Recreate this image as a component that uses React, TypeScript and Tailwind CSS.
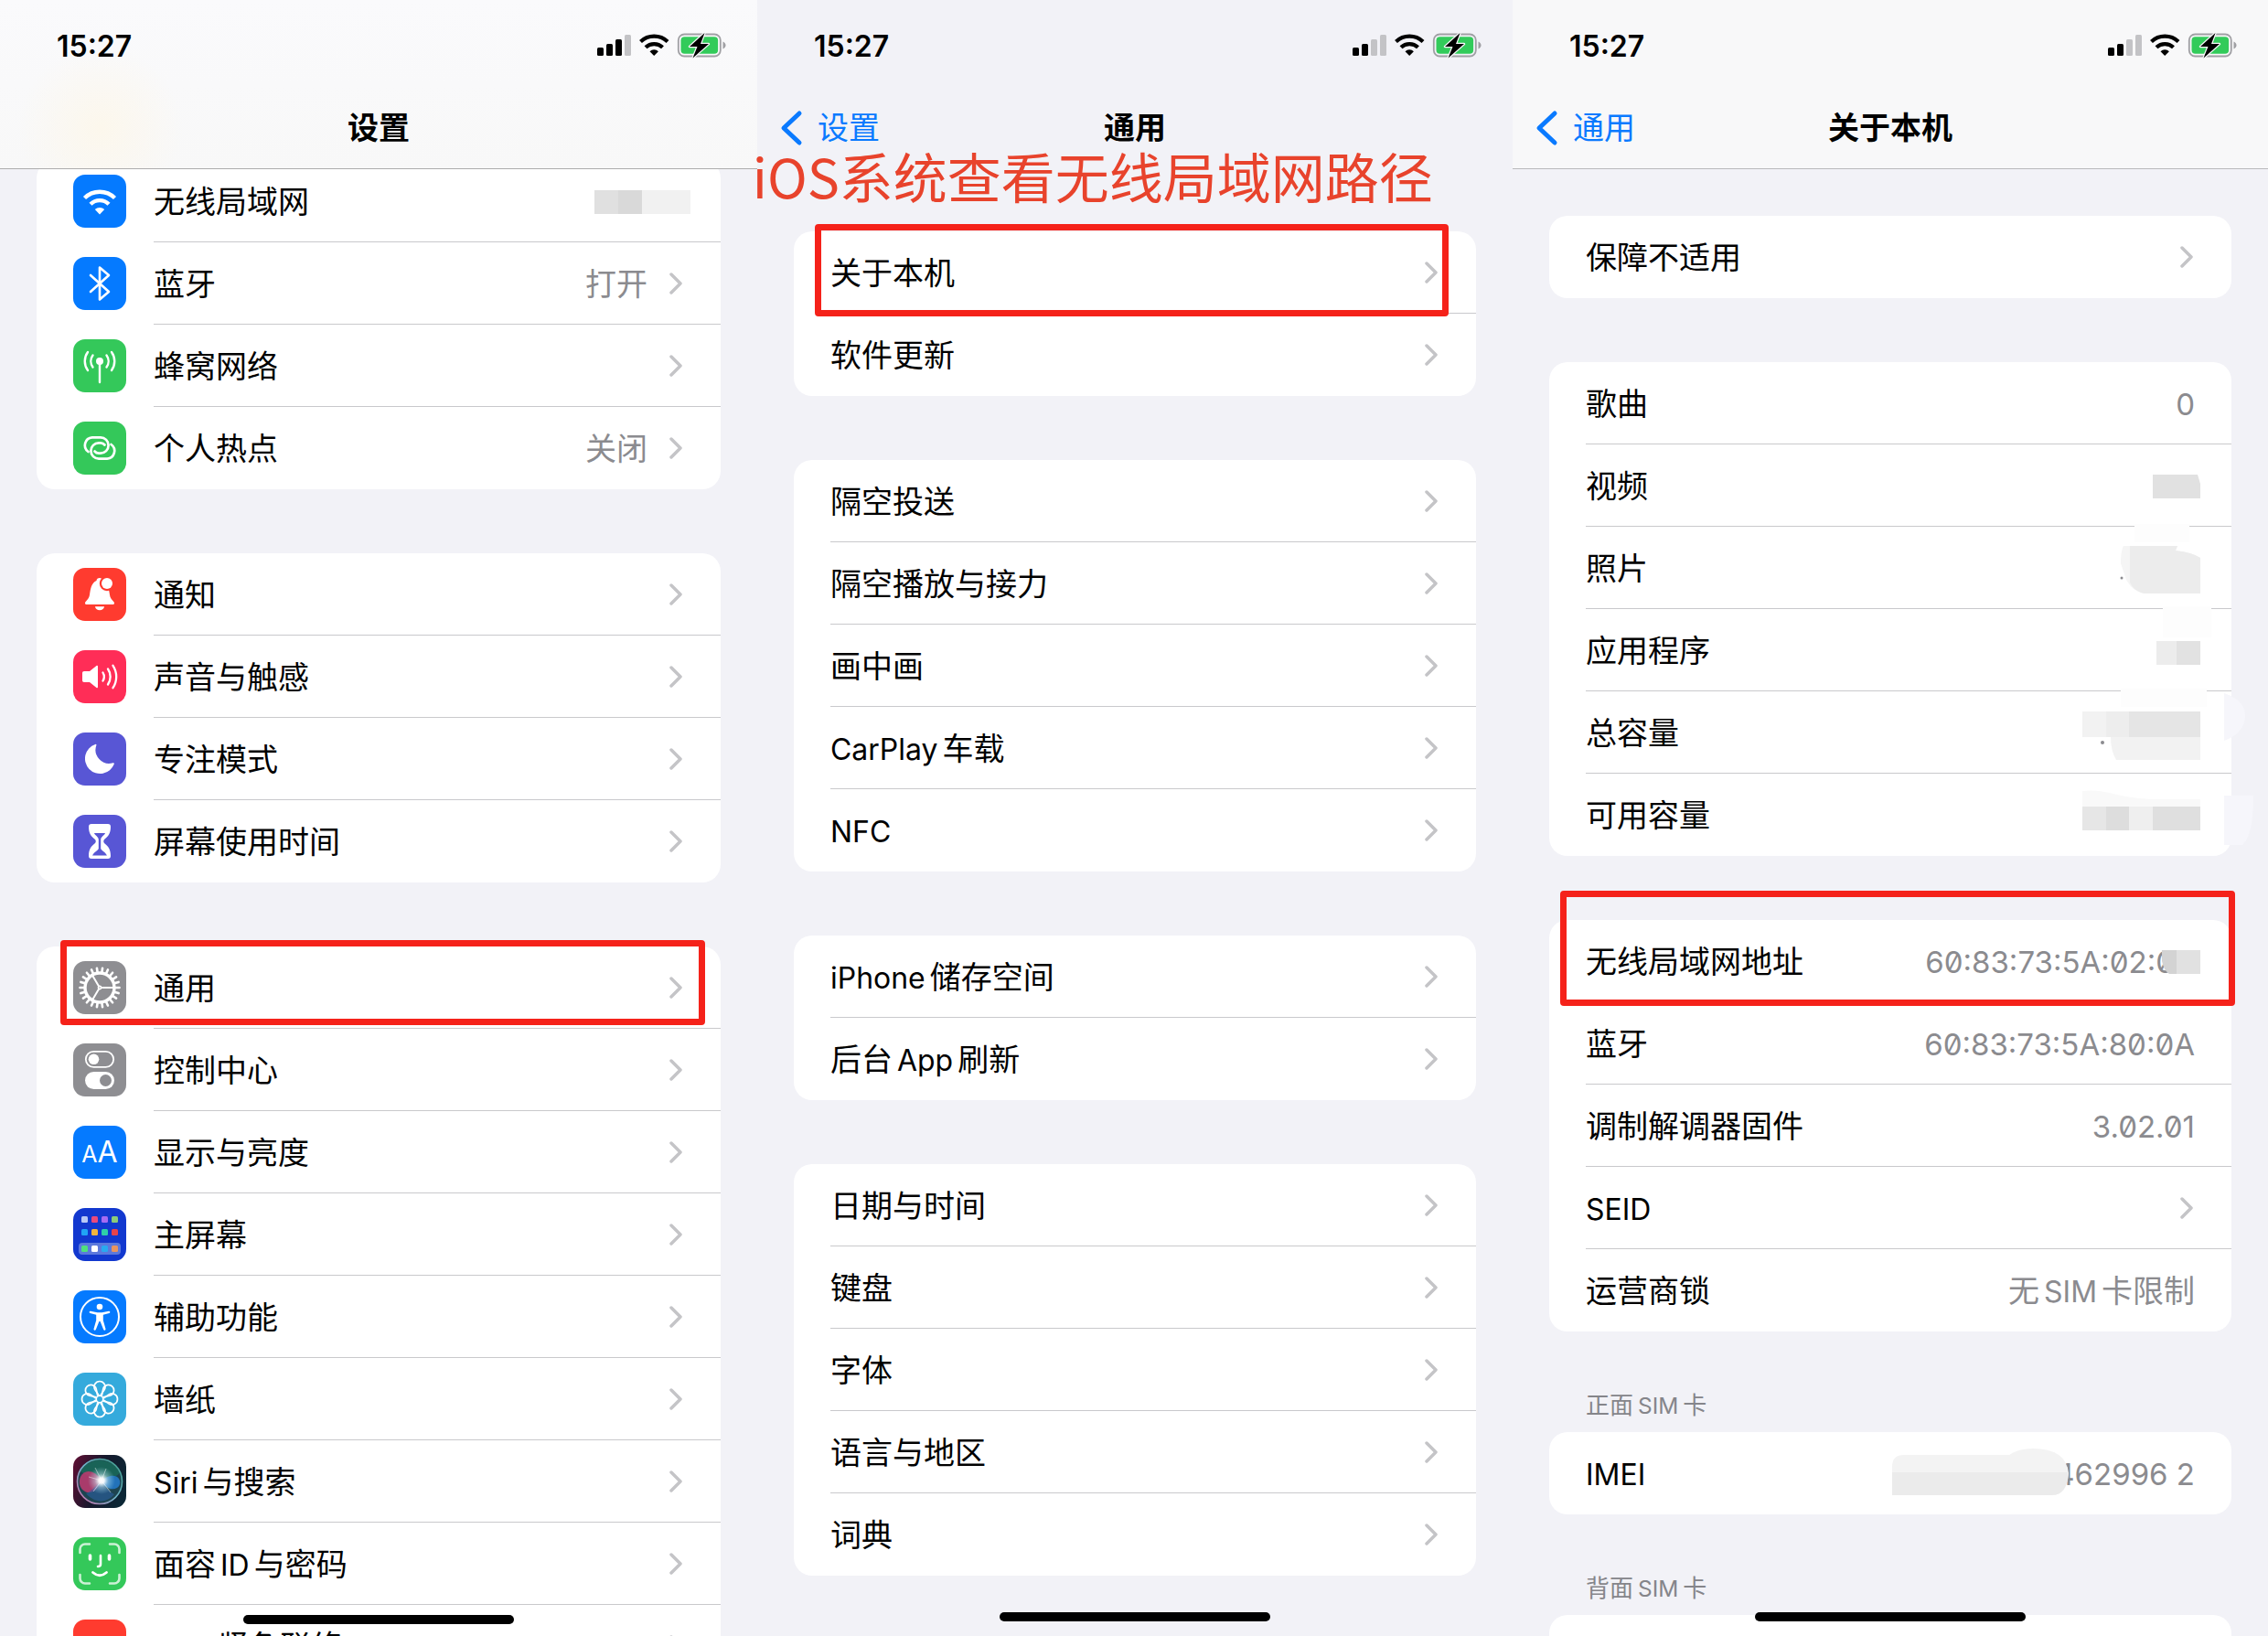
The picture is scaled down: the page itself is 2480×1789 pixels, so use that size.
import type { ReactNode } from "react";

type RowData = {
  label: string;
  value?: string;
  icon?: ReactNode;
  chevron?: boolean;
  slashed?: boolean;
  valueClass?: string;
  cover?: ReactNode;
  mark?: string;
};

const white = "#ffffff";

/* ---------- glyphs ---------- */

function Tile({ bg, children }: { bg: string; children?: ReactNode }) {
  return (
    <svg viewBox="0 0 58 58" className="size-[58px] shrink-0" aria-hidden="true">
      <rect width="58" height="58" rx="13" fill={bg} />
      {children}
    </svg>
  );
}

const WifiTile = (
  <Tile bg="#057aff">
    <g fill="none" stroke={white} strokeWidth="4.4">
      <path d="M12.5 25.5a23.5 23.5 0 0 1 33 0" />
      <path d="M19 32.2a14.3 14.3 0 0 1 20 0" />
    </g>
    <path d="M29 43.5l-5.2-5.4a7.6 7.6 0 0 1 10.4 0z" fill={white} />
  </Tile>
);

const BluetoothTile = (
  <Tile bg="#057aff">
    <path d="M19 20l20 18-10 8.5V11.500l10 8.500-20 18" fill="none" stroke={white} strokeWidth="2.600" strokeLinejoin="round" strokeLinecap="round" />
  </Tile>
);

const CellularTile = (
  <Tile bg="#34c85a">
    <g fill="none" stroke={white} strokeWidth="2.400" strokeLinecap="round">
      <path d="M29 25v22" />
      <path d="M21.500 17.500a11 11 0 0 0 0 13M36.500 17.500a11 11 0 0 1 0 13" />
      <path d="M16 14a17 17 0 0 0 0 20M42 14a17 17 0 0 1 0 20" />
    </g>
    <circle cx="29" cy="24" r="4" fill={white} />
  </Tile>
);

const HotspotTile = (
  <Tile bg="#34c85a">
    <g fill="none" stroke={white} strokeWidth="2.700" strokeLinecap="round">
      <path d="M16.500 33A8.600 8.600 0 0 1 20.800 17.400H30A8.600 8.600 0 0 1 30 34.600H28A6 6 0 0 1 23.500 32.500" />
      <path d="M16.500 33A8.600 8.600 0 0 1 20.800 17.400H30A8.600 8.600 0 0 1 30 34.600H28A6 6 0 0 1 23.500 32.500" transform="rotate(180 29 29)" />
    </g>
  </Tile>
);

const BellTile = (
  <Tile bg="#ff3b2f">
    <path d="M13 38.500c0-2 4-3.500 5-9 1-7 2-13 7.500-15.500 0-2 1.500-3 3.500-3 1.500 0 3 .8 3.500 2.500 5 2.500 6.500 8.500 7.500 16 .8 5.500 5 7 5 9 0 1-.8 1.500-2 1.500H15c-1.200 0-2-.5-2-1.500z" fill={white} />
    <path d="M24 42.200h10a5 4 0 0 1-10 0z" fill={white} />
    <circle cx="37" cy="17" r="8.200" fill="#ff3b2f" />
    <circle cx="37" cy="17" r="6" fill={white} />
  </Tile>
);

const SoundTile = (
  <Tile bg="#ff2d57">
    <path d="M12 23h6l7.500-6c.8-.6 1.500-.2 1.500.8v22.400c0 1-.7 1.400-1.500.8L18 35h-6c-1.200 0-2-.8-2-2v-8c0-1.200.8-2 2-2z" fill={white} />
    <g fill="none" stroke={white} strokeWidth="2.300" strokeLinecap="round">
      <path d="M32.500 24.500a8.500 8.500 0 0 1 0 9" />
      <path d="M38 20.500a15 15 0 0 1 0 17" />
      <path d="M43.500 16.800a22 22 0 0 1 0 24.400" />
    </g>
  </Tile>
);

const MoonTile = (
  <Tile bg="#5856d5">
    <path d="M25.500 13.500a1 1 0 0 0-1.400-.6 16.500 16.500 0 1 0 20.700 21.700 1 1 0 0 0-1.300-1.300 15 15 0 0 1-18-19.800z" fill={white} />
  </Tile>
);

const HourglassTile = (
  <Tile bg="#5856d5">
    <path d="M20 10h18c2 0 3 1.200 3 3 0 8-3 10.500-7 14-1 .9-1 3.100 0 4 4 3.500 7 6 7 14 0 1.800-1 3-3 3H20c-2 0-3-1.200-3-3 0-8 3-10.500 7-14 1-.9 1-3.100 0-4-4-3.500-7-6-7-14 0-1.800 1-3 3-3z" fill={white} />
    <path d="M23 20h12c-.8 2.500-4.800 4-4.800 7v10c1.300 2.500 4.800 3.500 6.800 7.500H21c2-4 5.500-5 6.800-7.500V27c0-3-4-4.500-4.800-7z" fill="#5856d5" />
  </Tile>
);

const teeth = Array.from({ length: 22 }, (_, i) => (i * 360) / 22);

const GearTile = (
  <Tile bg="#8e8e92">
    <g stroke={white} fill="none">
      <circle cx="29" cy="29" r="16" strokeWidth="3.400" />
      <g strokeWidth="2.600">
        {teeth.map((a) => (
          <path key={a} d="M45.500 29h5" transform={`rotate(${a} 29 29)`} strokeLinecap="round" />
        ))}
      </g>
      <path d="M30 29h14.500M28.500 28.200L21 15.500M28.500 29.800L21 42.500" strokeWidth="2" />
      <circle cx="29" cy="29" r="1.600" strokeWidth="1.600" />
    </g>
  </Tile>
);

const ControlTile = (
  <Tile bg="#8e8e92">
    <rect x="13.800" y="8.800" width="30.400" height="17" rx="8.500" fill="none" stroke={white} strokeWidth="1.800" />
    <circle cx="22.500" cy="17.300" r="5.800" fill={white} />
    <rect x="13" y="31" width="32" height="19" rx="9.500" fill={white} />
    <circle cx="35.500" cy="40.500" r="6.500" fill="#8e8e92" />
  </Tile>
);

const DisplayTile = (
  <span className="flex size-[58px] shrink-0 items-baseline justify-center rounded-[13px] bg-[#057aff] font-[Inter] leading-[58px] text-white" aria-hidden="true">
    <span className="text-[25px]">A</span>
    <span className="text-[32px]">A</span>
  </span>
);

const appDots: [number, number, string][] = [
  [9, 9, "#b9c8f5"], [20, 9, "#ea4a7c"], [31, 9, "#a66bf2"], [42, 9, "#8ccb78"],
  [9, 23, "#20a5f5"], [20, 23, "#f3b43c"], [31, 23, "#2fd0a8"], [42, 23, "#e8434a"],
  [9, 41, "#4fe07c"], [20, 41, "#ffffff"], [31, 41, "#28a9f0"], [42, 41, "#e9955f"],
];

const HomeTile = (
  <Tile bg="#1238cf">
    <rect x="6" y="38" width="46" height="13" rx="4" fill="#5b78dc" />
    {appDots.map(([x, y, c]) => (
      <rect key={`${x}-${y}`} x={x} y={y} width="7" height="7" rx="1.500" fill={c} />
    ))}
  </Tile>
);

const AccessTile = (
  <Tile bg="#057aff">
    <circle cx="29" cy="29" r="21" fill="none" stroke={white} strokeWidth="2" />
    <circle cx="29" cy="18" r="3.300" fill={white} />
    <path d="M19 22.800l7.500 1.400h5l7.500-1.400c1.500-.2 1.900 1.900.4 2.200L32.800 26.800v6l2.700 9.400c.3 1.500-1.700 2.100-2.300.7L29.600 34h-1.200l-3.600 8.900c-.6 1.400-2.600.8-2.300-.7l2.700-9.400v-6L18.600 25c-1.500-.3-1.100-2.400.4-2.200z" fill={white} />
  </Tile>
);

const petals = [0, 45, 90, 135, 180, 225, 270, 315];

const WallpaperTile = (
  <Tile bg="#35aadc">
    <g fill="none" stroke={white} strokeWidth="1.700">
      {petals.map((a) => (
        <path key={a} d="M28 24.800L23.800 18.500a6 6 0 1 1 10.400 0L30 24.800" transform={`rotate(${a} 29 29)`} />
      ))}
      <circle cx="29" cy="29" r="3.800" />
    </g>
  </Tile>
);

const SiriTile = (
  <Tile bg="url(#siriBase)">
    <defs>
      <linearGradient id="siriBase" x1="0" y1="0.2" x2="1" y2="0.5">
        <stop offset="0" stopColor="#5a0f33" />
        <stop offset="0.500" stopColor="#16182c" />
        <stop offset="1" stopColor="#0c2735" />
      </linearGradient>
      <linearGradient id="siriRing" x1="0" y1="1" x2="1" y2="0">
        <stop offset="0" stopColor="#d06aa8" />
        <stop offset="0.500" stopColor="#6fb4c9" />
        <stop offset="1" stopColor="#3c9c86" />
      </linearGradient>
      <radialGradient id="siriGlow">
        <stop offset="0" stopColor="#ffffff" />
        <stop offset="0.200" stopColor="#ffffff" stopOpacity="0.950" />
        <stop offset="0.500" stopColor="#c9eef8" stopOpacity="0.450" />
        <stop offset="1" stopColor="#9fe0f0" stopOpacity="0" />
      </radialGradient>
    </defs>
    <circle cx="29" cy="29" r="24" fill="#1d4450" />
    <path d="M8 18a24 24 0 0 1 43 2c-8 8-30 8-43-2z" fill="#18705a" opacity="0.700" />
    <path d="M31 28C24 16 12 15 8 24s3 18 10 17 10-6 13-13z" fill="#c23a70" opacity="0.850" />
    <path d="M30 29c6-6 16-9 20-3s-2 13-9 11-8-5-11-8z" fill="#2478c4" opacity="0.900" />
    <path d="M30 29c-6 6-12 12-16 13 9 11 23 11 31 1-6-3-11-9-15-14z" fill="#2b5fa0" opacity="0.600" />
    <circle cx="31" cy="28" r="15" fill="url(#siriGlow)" />
    <path d="M31 28L24 14M31 28L17 24M31 28l-9 12M31 28l10 13M31 28l5-13" stroke={white} strokeWidth="0.800" opacity="0.600" />
    <circle cx="29" cy="29" r="24.500" fill="none" stroke="url(#siriRing)" strokeWidth="1.600" />
  </Tile>
);

const FaceTile = (
  <Tile bg="#34c85a">
    <g fill="none" stroke={white} strokeLinecap="round">
      <path d="M7.500 17v-4a5.500 5.500 0 0 1 5.500-5.500h5M40 7.500h5a5.500 5.500 0 0 1 5.500 5.500v4M50.500 41v4a5.500 5.500 0 0 1-5.500 5.500h-5M18 50.500h-5A5.500 5.500 0 0 1 7.500 45v-4" strokeWidth="2.600" opacity="0.750" />
      <path d="M18.500 20v4M39.500 20v4" strokeWidth="3.600" />
      <path d="M30 20v9.500q0 2.500-3 2.500" strokeWidth="2.600" />
      <path d="M21.500 38.500q7.500 6.500 15 0" strokeWidth="2.800" />
    </g>
  </Tile>
);

const SosTile = (
  <span className="flex size-[58px] shrink-0 items-center justify-center rounded-[13px] bg-[#ff3b2f] font-[Inter] text-[22px] font-semibold text-white" aria-hidden="true">
    SOS
  </span>
);

function Chevron() {
  return (
    <svg viewBox="0 0 16 26" className="h-[26px] w-4 shrink-0" fill="none" stroke="#c4c4c7" strokeWidth="3.500" strokeLinecap="round" strokeLinejoin="round" aria-hidden="true">
      <path d="M2 3l10 10L2 23" />
    </svg>
  );
}

function StatusIcons({ bars }: { bars: number }) {
  const heights = [9, 13, 18, 23];
  return (
    <svg viewBox="0 0 142 28" className="h-7 w-[142px]" aria-hidden="true">
      {heights.map((h, i) => (
        <rect key={h} x={1 + i * 10} y={25 - h} width="7" height={h} rx="1.500" fill={i < bars ? "#000000" : "#c3c3c6"} />
      ))}
      <g fill="none" stroke="#000000" strokeWidth="4.200">
        <path d="M48.500 9.500a21.500 21.500 0 0 1 29.500 0" />
        <path d="M54 15.700a13.500 13.500 0 0 1 18.500 0" />
      </g>
      <path d="M63.200 25l-4.700-4.800a6.800 6.800 0 0 1 9.400 0z" fill="#000000" />
      <rect x="89.800" y="1.500" width="46" height="24" rx="6.500" fill="none" stroke="#a0a0a4" strokeWidth="1.800" />
      <path d="M138.500 9.500c4 1.500 4 6.500 0 8z" fill="#a0a0a4" />
      <rect x="92.500" y="4.200" width="40.600" height="18.600" rx="4" fill="#32cb5a" />
      <path d="M118.500 0L102 15h8.500l-5 12.500L123 12h-9z" fill="#000000" stroke="#f7f7f9" strokeWidth="2.400" strokeLinejoin="round" paintOrder="stroke" />
    </svg>
  );
}

/* ---------- pixelated value covers; x = 340 is the card's right edge ---------- */

type Block = [number, number, number, number, string];

function Cover({ blocks = [], children }: { blocks?: Block[]; children?: ReactNode }) {
  return (
    <svg viewBox="-60 0 400 90" className="pointer-events-none absolute top-0 right-0 h-[90px] w-[400px] overflow-visible" aria-hidden="true">
      {blocks.map(([x, y, w, h, c], i) => (
        <rect key={i} x={x} y={y} width={w} height={h} fill={c} />
      ))}
      {children}
    </svg>
  );
}

/* ---------- layout ---------- */

/* Latin words inside Chinese text are set a little smaller, with air on each side. */
function Mixed({ text }: { text: string }) {
  return (
    <>
      {text.split(/([A-Za-z]+)/).map((part, i) =>
        i % 2 ? (
          <span key={i} className="mx-[5px] text-[0.94em] first:ml-0 last:mr-0">
            {part}
          </span>
        ) : (
          part && <span key={i}>{part}</span>
        ),
      )}
    </>
  );
}

function Row({ row, last }: { row: RowData; last: boolean }) {
  const chevron = row.chevron ?? true;
  const numeric = row.value !== undefined && /^\d/.test(row.value);
  return (
    <a href="#" className="relative flex h-[90px] items-center gap-[30px] pl-10">
      {row.icon}
      <span className={`flex h-full min-w-0 flex-1 items-center justify-between gap-6 border-b pr-10 ${last ? "border-transparent" : "border-[#c9c9cc]"}`}>
        <span className="pt-[3px] whitespace-nowrap text-black">
          <Mixed text={row.label} />
        </span>
        <span className="flex items-center gap-6 text-[#8b8b8f]">
          {row.value && (
            <span className={`pt-[3px] whitespace-nowrap ${row.slashed ? "slashed-zero" : ""} ${row.valueClass ?? ""}`}>
              {numeric ? <span className="text-[33px]">{row.value}</span> : <Mixed text={row.value} />}
            </span>
          )}
          {chevron && <Chevron />}
        </span>
      </span>
      {row.cover}
      {row.mark && <span className={`pointer-events-none absolute z-20 rounded-[4px] border-[7px] border-[#f5221a] ${row.mark}`} />}
    </a>
  );
}

function Card({ rows }: { rows: RowData[] }) {
  return (
    <div className="rounded-[20px] bg-white">
      {rows.map((row, i) => (
        <Row key={row.label} row={row} last={i === rows.length - 1} />
      ))}
    </div>
  );
}

type PhoneProps = { title: string; back?: string; bars: number; header: string; body: string; home: string; children: ReactNode };

function Phone({ title, back, bars, header, body, home, children }: PhoneProps) {
  return (
    <section className="relative h-full min-w-0 overflow-hidden bg-[#f2f2f7]">
      <header className={`relative z-10 border-b pb-1 ${header}`}>
        <div className="flex h-[100px] items-center justify-between pr-[34px] pl-[62px]">
          <time className="pt-px font-[Inter] text-[32px] font-semibold">15:27</time>
          <StatusIcons bars={bars} />
        </div>
        <nav className="grid h-20 grid-cols-[1fr_auto_1fr] items-center">
          {back ? (
            <a href="#" className="flex items-center gap-4 pl-6 text-[#0a7aff]">
              <svg viewBox="0 0 26 40" className="h-10 w-[26px]" fill="none" stroke="currentColor" strokeWidth="5" strokeLinecap="round" strokeLinejoin="round" aria-hidden="true">
                <path d="M22 4L5 20l17 16" />
              </svg>
              {back}
            </a>
          ) : (
            <span />
          )}
          <h1 className="font-bold">{title}</h1>
        </nav>
      </header>
      <div className={`flex flex-col px-10 ${body}`}>{children}</div>
      <div className={`absolute left-1/2 z-20 h-[10px] w-[296px] -translate-x-1/2 rounded-full bg-black ${home}`} />
    </section>
  );
}

const radios: RowData[] = [
  {
    label: "无线局域网",
    icon: WifiTile,
    chevron: false,
    cover: (
      <Cover
        blocks={[
          [202, 33, 26, 26, "#e0e0e0"],
          [228, 33, 26, 26, "#d9d9d9"],
          [254, 33, 53, 26, "#f1f1f1"],
        ]}
      />
    ),
  },
  { label: "蓝牙", value: "打开", icon: BluetoothTile },
  { label: "蜂窝网络", icon: CellularTile },
  { label: "个人热点", value: "关闭", icon: HotspotTile },
];

const alerts: RowData[] = [
  { label: "通知", icon: BellTile },
  { label: "声音与触感", icon: SoundTile },
  { label: "专注模式", icon: MoonTile },
  { label: "屏幕使用时间", icon: HourglassTile },
];

const system: RowData[] = [
  { label: "通用", icon: GearTile, mark: "-top-[7px] bottom-[4px] left-[26px] right-[17px]" },
  { label: "控制中心", icon: ControlTile },
  { label: "显示与亮度", icon: DisplayTile },
  { label: "主屏幕", icon: HomeTile },
  { label: "辅助功能", icon: AccessTile },
  { label: "墙纸", icon: WallpaperTile },
  { label: "Siri与搜索", icon: SiriTile },
  { label: "面容ID与密码", icon: FaceTile },
  { label: "SOS紧急联络", icon: SosTile },
];

const general: RowData[][] = [
  [{ label: "关于本机", mark: "-top-[8px] -bottom-[3px] left-[23px] right-[30px]" }, { label: "软件更新" }],
  [{ label: "隔空投送" }, { label: "隔空播放与接力" }, { label: "画中画" }, { label: "CarPlay车载" }, { label: "NFC" }],
  [{ label: "iPhone储存空间" }, { label: "后台App刷新" }],
  [{ label: "日期与时间" }, { label: "键盘" }, { label: "字体" }, { label: "语言与地区" }, { label: "词典" }],
];

const media: RowData[] = [
  { label: "歌曲", value: "0", chevron: false },
  {
    label: "视频",
    chevron: false,
    cover: (
      <Cover>
        <path d="M254 33h49l3 10v16h-52z" fill="#e1e1e1" />
      </Cover>
    ),
  },
  {
    label: "照片",
    chevron: false,
    cover: (
      <Cover blocks={[[234, -3, 60, 20, "#fdfdfd"]]}>
        <path d="M222 21h59l-2 5q18 2 27 8v39h-61q-13-2-20-15l-6-18q0-14 3-19z" fill="#f5f5f5" />
        <path d="M229 21h52l-2 5q18 2 27 8v39h-61q-11-2-16-12z" fill="#ececec" />
        <circle cx="220" cy="56" r="1.500" fill="#8b8b8f" />
      </Cover>
    ),
  },
  {
    label: "应用程序",
    chevron: false,
    cover: (
      <Cover
        blocks={[
          [265, -3, 53, 34, "#fdfdfd"],
          [258, 35, 22, 26, "#ececec"],
          [280, 35, 26, 26, "#e2e2e2"],
        ]}
      />
    ),
  },
  {
    label: "总容量",
    chevron: false,
    cover: (
      <Cover
        blocks={[
          [219, -3, 94, 20, "#fdfdfd"],
          [177, 22, 26, 28, "#f2f2f2"],
          [203, 22, 25, 28, "#ededed"],
          [228, 22, 78, 28, "#e5e5e5"],
        ]}
      >
        <path d="M208 50h98v25h-92q-6-10-6-25z" fill="#f2f2f2" />
        <path d="M332 2q24 8 23 26t-23 26z" fill="#f6f6fb" />
        <circle cx="199" cy="56" r="2" fill="#8b8b8f" />
      </Cover>
    ),
  },
  {
    label: "可用容量",
    chevron: false,
    cover: (
      <Cover
        blocks={[
          [177, 36, 26, 26, "#e6e6e6"],
          [203, 36, 25, 26, "#dddddd"],
          [228, 36, 26, 26, "#efefef"],
          [254, 36, 52, 26, "#dfdfdf"],
        ]}
      >
        <path d="M177 36V19q16-2 34 3t43 6h52v8z" fill="#f9f9f9" />
        <path d="M332 24h32q0 44-12 54h-20z" fill="#f6f6fb" />
      </Cover>
    ),
  },
];

const device: RowData[] = [
  {
    label: "无线局域网地址",
    value: "60:83:73:5A:02:0",
    slashed: true,
    chevron: false,
    valueClass: "pr-[22px]",
    mark: "-top-[32px] -bottom-[4px] left-[12px] -right-[4px]",
    cover: (
      <Cover>
        <path d="M264 33h17v26h-9q-6-4-8-14z" fill="#d3d3d3" />
        <path d="M280 33h26v26h-26z" fill="#e1e1e1" />
      </Cover>
    ),
  },
  { label: "蓝牙", value: "60:83:73:5A:80:0A", slashed: true, chevron: false },
  { label: "调制解调器固件", value: "3.02.01", slashed: true, chevron: false },
  { label: "SEID" },
  { label: "运营商锁", value: "无SIM卡限制", chevron: false },
];

const imei: RowData[] = [
  {
    label: "IMEI",
    value: "462996 2",
    chevron: false,
    cover: (
      <Cover>
        <path d="M-31 38q0-13 13-13H97q10-7 26-7 36 0 39 27-2 24-18 24H-31z" fill="#f3f3f3" />
        <path d="M-31 44h193q-2 25-18 25H-31z" fill="#ebebeb" />
      </Cover>
    ),
  },
];

function SimLabel({ children }: { children: string }) {
  return (
    <h2 className="px-10 pt-[63px] pb-[11px] text-[26px] leading-9 text-[#85858a]">
      <Mixed text={children} />
    </h2>
  );
}

export default function App() {
  return (
    <main className="relative grid h-screen grid-cols-[828fr_826fr_826fr] overflow-hidden bg-[#f2f2f7] font-[Inter,'Noto_Sans_CJK_SC',sans-serif] text-[34px] leading-[48px]">
      <Phone
        title="设置"
        bars={3}
        header="border-[#adadad] bg-[radial-gradient(circle_at_110px_140px,#fcf7ec_0,#f9f8f700_90px),linear-gradient(#fafafc,#f8f8f8)]"
        body="-mt-[10px] gap-[70px]"
        home="bottom-[13px]"
      >
        <Card rows={radios} />
        <Card rows={alerts} />
        <Card rows={system} />
      </Phone>
      <Phone title="通用" back="设置" bars={2} header="border-transparent" body="pt-[68px] gap-[70px]" home="bottom-4">
        {general.map((rows) => (
          <Card key={rows[0].label} rows={rows} />
        ))}
      </Phone>
      <Phone title="关于本机" back="通用" bars={2} header="border-[#b9b9bc] bg-[#f8f8f9]" body="pt-[51px]" home="bottom-4">
        <div className="flex flex-col gap-[70px]">
          <Card rows={[{ label: "保障不适用" }]} />
          <Card rows={media} />
          <Card rows={device} />
        </div>
        <SimLabel>正面SIM卡</SimLabel>
        <Card rows={imei} />
        <SimLabel>背面SIM卡</SimLabel>
        <Card rows={[{ label: "ICCID" }]} />
      </Phone>
      <p className="absolute top-[160px] left-1/3 z-30 -ml-1 font-['Noto_Sans_CJK_SC',sans-serif] text-[59px] leading-[64px] whitespace-nowrap text-[#e8432c]">
        iOS系统查看无线局域网路径
      </p>
    </main>
  );
}
